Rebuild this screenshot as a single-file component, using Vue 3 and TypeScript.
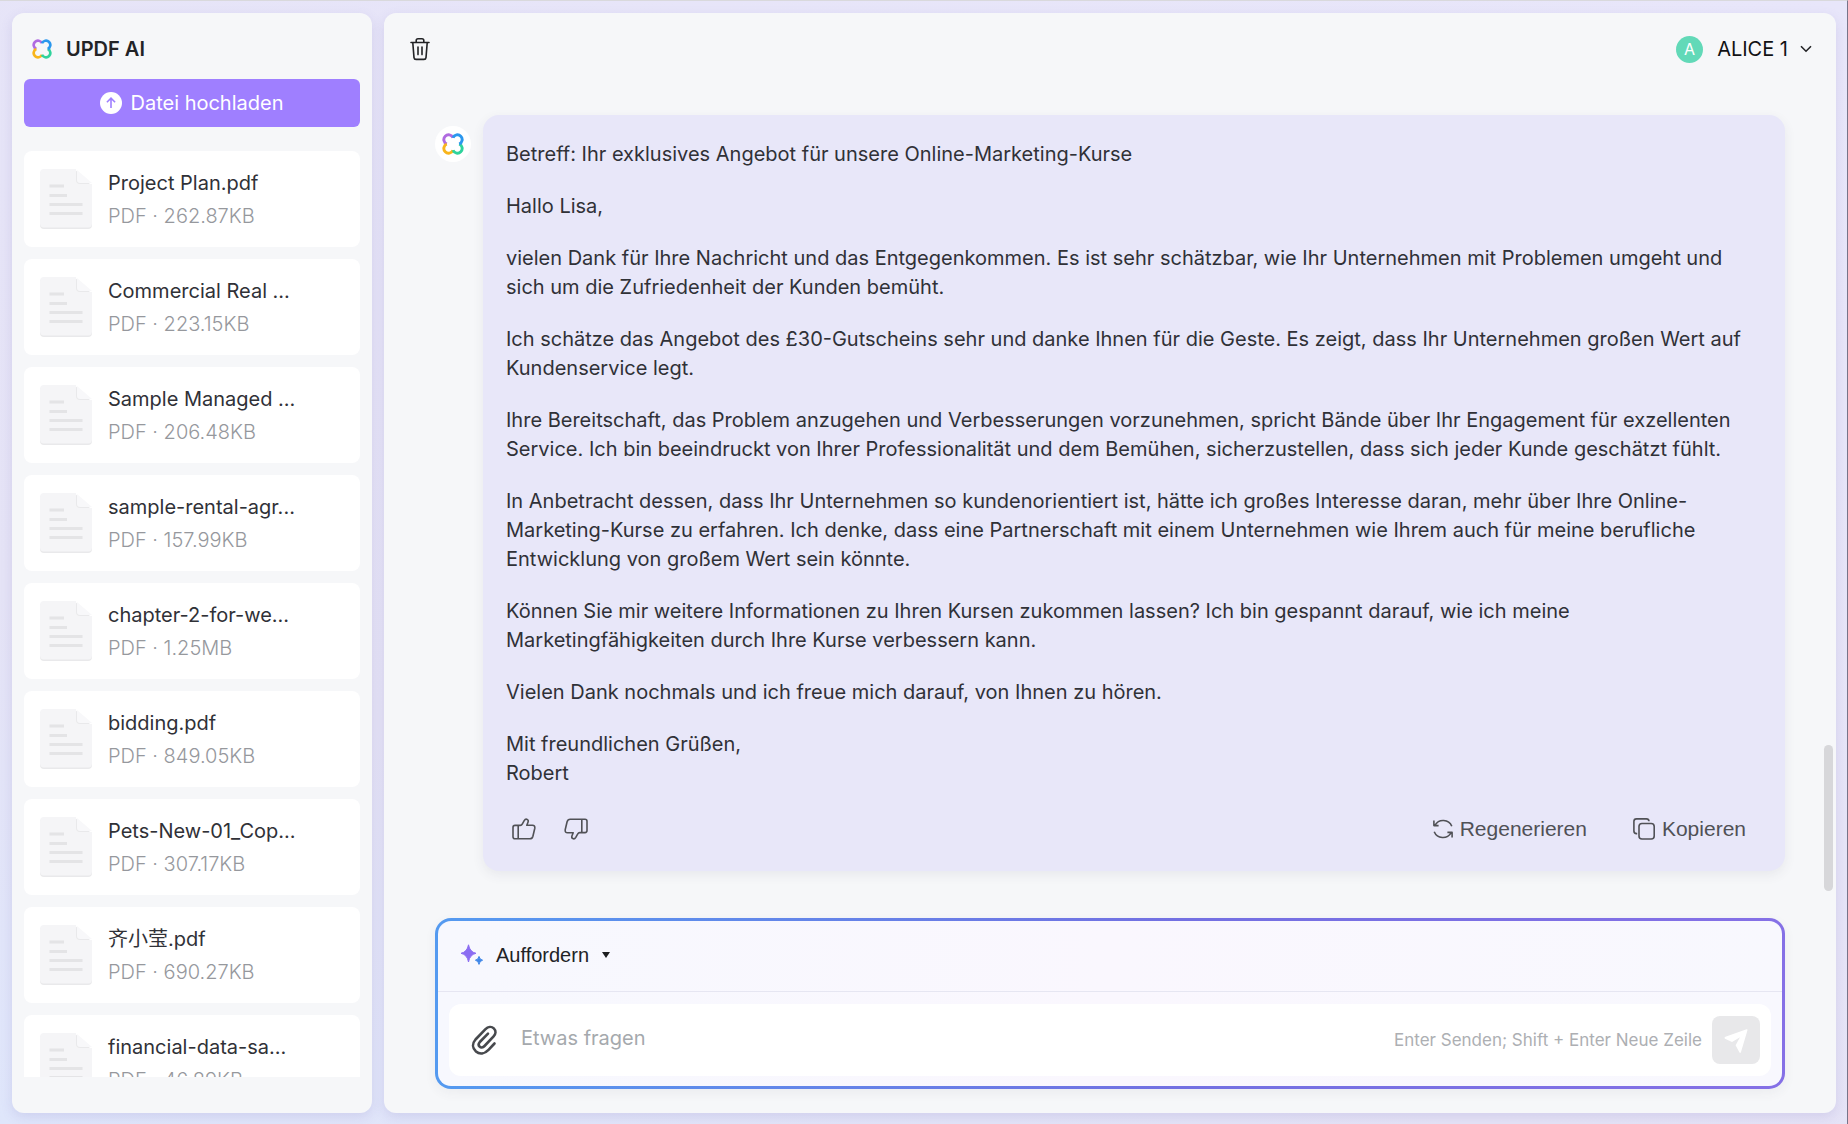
<script setup lang="ts">
interface PdfFile {
  name: string
  size: string
}

const files: PdfFile[] = [
  { name: 'Project Plan.pdf', size: '262.87KB' },
  { name: 'Commercial Real ...', size: '223.15KB' },
  { name: 'Sample Managed ...', size: '206.48KB' },
  { name: 'sample-rental-agr...', size: '157.99KB' },
  { name: 'chapter-2-for-we...', size: '1.25MB' },
  { name: 'bidding.pdf', size: '849.05KB' },
  { name: 'Pets-New-01_Cop...', size: '307.17KB' },
  { name: '齐小莹.pdf', size: '690.27KB' },
  { name: 'financial-data-sa...', size: '46.89KB' },
]

const paragraphs: string[] = [
  'Betreff: Ihr exklusives Angebot für unsere Online-Marketing-Kurse',
  'Hallo Lisa,',
  'vielen Dank für Ihre Nachricht und das Entgegenkommen. Es ist sehr schätzbar, wie Ihr Unternehmen mit Problemen umgeht und\nsich um die Zufriedenheit der Kunden bemüht.',
  'Ich schätze das Angebot des £30-Gutscheins sehr und danke Ihnen für die Geste. Es zeigt, dass Ihr Unternehmen großen Wert auf\nKundenservice legt.',
  'Ihre Bereitschaft, das Problem anzugehen und Verbesserungen vorzunehmen, spricht Bände über Ihr Engagement für exzellenten\nService. Ich bin beeindruckt von Ihrer Professionalität und dem Bemühen, sicherzustellen, dass sich jeder Kunde geschätzt fühlt.',
  'In Anbetracht dessen, dass Ihr Unternehmen so kundenorientiert ist, hätte ich großes Interesse daran, mehr über Ihre Online-\nMarketing-Kurse zu erfahren. Ich denke, dass eine Partnerschaft mit einem Unternehmen wie Ihrem auch für meine berufliche\nEntwicklung von großem Wert sein könnte.',
  'Können Sie mir weitere Informationen zu Ihren Kursen zukommen lassen? Ich bin gespannt darauf, wie ich meine\nMarketingfähigkeiten durch Ihre Kurse verbessern kann.',
  'Vielen Dank nochmals und ich freue mich darauf, von Ihnen zu hören.',
  'Mit freundlichen Grüßen,\nRobert',
]
</script>

<template>
  <div class="app">
    <svg class="defs" aria-hidden="true">
      <defs>
        <symbol id="logo" viewBox="0 0 24 24">
          <g fill="none" stroke-width="3.2">
            <path d="M12 5.200A5.200 5.200 0 1 0 5.200 12" stroke="#b06be0" />
            <path d="M5.200 12A5.200 5.200 0 1 0 12 18.800" stroke="#f8b51c" />
            <path d="M12 18.800A5.200 5.200 0 1 0 18.800 12" stroke="#2fd39c" />
            <path d="M18.800 12A5.200 5.200 0 1 0 12 5.200" stroke="#2a97ee" />
          </g>
        </symbol>
      </defs>
    </svg>

    <aside class="sidebar">
      <header class="brand">
        <svg class="brand-logo"><use href="#logo" /></svg>
        <h1>UPDF AI</h1>
      </header>
      <button class="upload" type="button">
        <svg viewBox="0 0 22 22" width="22" height="22">
          <circle cx="11" cy="11" r="11" fill="#fff" />
          <path d="M11 16V6.400M6.900 10.200L11 6.200L15.100 10.200" fill="none" stroke="#9f7fff" stroke-width="1.600" />
        </svg>
        Datei hochladen
      </button>
      <ul class="files">
        <li v-for="file in files" :key="file.name" class="file">
          <svg class="file-icon" viewBox="0 0 52 60">
            <path d="M4 1.500H36L52 17V56a4 4 0 0 1-4 4H4a4 4 0 0 1-4-4V5.500a4 4 0 0 1 4-4z" fill="#e9e9eb" />
            <path d="M4 0H36V11a4 4 0 0 0 4 4H52V54.500a4 4 0 0 1-4 4H4a4 4 0 0 1-4-4V4a4 4 0 0 1 4-4z" fill="#f5f5f7" />
            <path d="M37 1L52 14H40a3 3 0 0 1-3-3z" fill="#f8f8fa" />
            <path d="M9.500 17H24M9.500 26.500H27M9.500 35.500H42.500M9.500 44.500H42.500" stroke="#e4e4e6" stroke-width="3" />
          </svg>
          <div class="file-text">
            <span class="file-name">{{ file.name }}</span>
            <span class="file-meta">PDF · {{ file.size }}</span>
          </div>
        </li>
      </ul>
    </aside>

    <main class="chat">
      <header class="topbar">
        <button class="icon-button" type="button" aria-label="Verlauf löschen">
          <svg viewBox="0 0 20 24" width="20" height="24" fill="none" stroke="#222326" stroke-width="1.600" stroke-linecap="round" stroke-linejoin="round">
            <path d="M1 5.500H19M6.200 5.200V3.600Q6.200 1.800 8 1.800H12Q13.800 1.800 13.800 3.600V5.200M2.800 5.800L4 20.600Q4.200 22.400 6 22.400H14Q15.800 22.400 16 20.600L17.200 5.800M8 10V17.600M12 10V17.600" />
          </svg>
        </button>
        <button class="account" type="button">
          <span class="avatar">A</span>
          <span class="account-name">ALICE 1</span>
          <svg viewBox="0 0 12 8" width="12" height="8" fill="none" stroke="#222326" stroke-width="1.600">
            <path d="M1 1.200L6 6.200L11 1.200" />
          </svg>
        </button>
      </header>

      <section class="thread">
        <div class="bot"><svg class="bot-logo"><use href="#logo" /></svg></div>
        <article class="bubble">
          <p v-for="(text, i) in paragraphs" :key="i">{{ text }}</p>
          <footer class="actions">
            <button type="button" aria-label="Gefällt mir">
              <svg viewBox="0 0 24 22" width="24" height="22" class="line">
                <path d="M6.200 7.400V20.800M1 9.400Q1 7.400 3 7.400H8.200Q9.600 7.400 10.400 5.800L12.200 2.600Q13.400 0.600 15.200 1.400Q16.800 2.200 16 4.200L14.800 7.200H20.400Q23.200 7.400 22.800 10.200L20.900 18.200Q20.200 20.800 17.800 20.800H3Q1 20.800 1 18.800Z" />
              </svg>
            </button>
            <button type="button" aria-label="Gefällt mir nicht">
              <svg viewBox="0 0 24 22" width="24" height="22" class="line">
                <path d="M17.800 14.600V1.200M23 12.600Q23 14.600 21 14.600H15.800Q14.400 14.600 13.600 16.200L11.800 19.400Q10.600 21.400 8.800 20.600Q7.200 19.800 8 17.800L9.200 14.800H3.600Q0.800 14.600 1.200 11.800L3.100 3.800Q3.800 1.200 6.200 1.200H21Q23 1.200 23 3.200Z" />
              </svg>
            </button>
            <button class="labelled push" type="button">
              <svg viewBox="0 0 20 20" width="20" height="20" class="line">
                <path d="M18.800 7.200A9.400 9.400 0 0 0 2 6.200M0.900 1.600V6.600H5.600M1.200 12.800A9.400 9.400 0 0 0 18 13.800M19.100 18.400V13.400H14.400" />
              </svg>
              Regenerieren
            </button>
            <button class="labelled" type="button">
              <svg viewBox="0 0 22 22" width="22" height="22" class="line">
                <rect x="6" y="5.500" width="15.200" height="15.500" rx="3" />
                <path d="M4.200 15.600H3.500Q0.900 15.600 0.900 13V3.500Q0.900 0.900 3.500 0.900H13.500Q15.800 0.900 16 3.200" />
              </svg>
              Kopieren
            </button>
          </footer>
        </article>
      </section>

      <form class="composer" @submit.prevent>
        <div class="prompt-row">
          <button class="prompt" type="button">
            <svg viewBox="0 0 22 22" width="22" height="22">
              <path d="M7.500 0.800Q8.800 8 15 9.300Q8.800 10.600 7.500 18Q6.200 10.600 0 9.300Q6.200 8 7.500 0.800Z" fill="#8b6df2" stroke="#8b6df2" stroke-linejoin="round" />
              <path d="M18 12.400Q18.600 15.600 21.600 16.200Q18.600 16.800 18 20.400Q17.400 16.800 14.400 16.200Q17.400 15.600 18 12.400Z" fill="#3f87e8" stroke="#3f87e8" stroke-linejoin="round" />
            </svg>
            Auffordern
            <svg viewBox="0 0 8 6" width="8" height="6"><path d="M0 0H8L4 6Z" fill="#1d1e20" /></svg>
          </button>
        </div>
        <div class="ask">
          <button class="icon-button" type="button" aria-label="Datei anhängen">
            <svg viewBox="0 0 26 30" width="26" height="30" fill="none" stroke="#47494d" stroke-width="2.600" stroke-linecap="round">
              <path d="M23.500 18.500L17.500 24.800C13.500 29 8.500 29.500 5 26.500C1.200 23 1 18.500 4.500 14.500L14.500 4.200C17 1.600 20.600 1.300 22.800 3.400C25.300 5.800 24.800 9 22.600 11.400L13.500 21C11.800 22.800 9.800 22.800 8.600 21.600C7.300 20.300 7.400 18.600 8.800 17L17 8.600" />
            </svg>
          </button>
          <input type="text" placeholder="Etwas fragen" aria-label="Etwas fragen" />
          <span class="hint">Enter Senden; Shift + Enter Neue Zeile</span>
          <button class="send" type="submit" aria-label="Senden">
            <svg viewBox="0 0 24 24" width="24" height="24" fill="#fff">
              <path d="M22.600 1.200Q23.800 1 23.400 2.400L17 24Q16.200 26 15.200 24L11.600 17.200L16 9.200L8 14L1 10.800Q-0.400 9.600 1.400 8.800Z" />
            </svg>
          </button>
        </div>
      </form>
      <span class="scroll-thumb"></span>
    </main>
  </div>
</template>

<style>
body {
  margin: 0;
}
</style>

<style scoped>
.app {
  box-sizing: border-box;
  display: flex;
  gap: 12px;
  height: 100vh;
  padding: 12px 11px 11px 12px;
  border-top: 1px solid #d9d9dc;
  border-right: 1px solid #77748a;
  background: linear-gradient(20deg, #dfe6fb 0%, #e5e3f6 30%, #e8e6fa 100%);
  font-family: Inter, "Noto Sans CJK SC", sans-serif;
  font-weight: 400;
  font-size: 20px;
  color: #303137;
  overflow: hidden;
}

.defs {
  position: absolute;
  width: 0;
  height: 0;
}

button {
  display: flex;
  align-items: center;
  margin: 0;
  padding: 0;
  border: 0;
  background: none;
  font: inherit;
  color: inherit;
}

svg {
  display: block;
  flex: none;
  overflow: visible;
}

.sidebar,
.chat {
  box-sizing: border-box;
  border-radius: 12px;
  background: #f6f7f9;
  box-shadow: 0 4px 12px rgba(110, 100, 180, 0.16);
}

.sidebar {
  display: flex;
  flex-direction: column;
  flex: none;
  width: 360px;
  padding: 0 12px 36px;
}

.brand {
  display: flex;
  align-items: center;
  gap: 14px;
  height: 66px;
  padding: 6px 8px 0;
  box-sizing: border-box;
}

.brand-logo {
  width: 20px;
  height: 20px;
}

.brand h1 {
  margin: 0;
  font-size: 20px;
  font-weight: 600;
  color: #222326;
}

.upload {
  flex: none;
  justify-content: center;
  gap: 8px;
  height: 48px;
  border-radius: 6px;
  background: #9f7fff;
  color: #fff;
}

.files {
  flex: 1;
  min-height: 0;
  margin: 24px 0 0;
  padding: 0;
  overflow: hidden;
  list-style: none;
}

.file {
  display: flex;
  gap: 16px;
  height: 96px;
  margin-bottom: 12px;
  padding: 16px 16px 0;
  box-sizing: border-box;
  border-radius: 8px;
  background: #fff;
}

.file-icon {
  width: 52px;
  height: 60px;
  margin-top: 2px;
}

.file-text {
  display: flex;
  flex-direction: column;
  line-height: 33px;
  white-space: nowrap;
}

.file-meta {
  font-weight: 300;
  color: #96989d;
}

.chat {
  position: relative;
  display: flex;
  flex-direction: column;
  flex: 1;
  min-width: 0;
  padding: 0 51px 24px;
}

.topbar {
  display: flex;
  align-items: center;
  justify-content: space-between;
  height: 72px;
  margin: 0 -27px 0 -25px;
}

.account {
  color: #111214;
}

.account-name {
  margin: 0 12px 0 14px;
}

.avatar {
  width: 27px;
  height: 27px;
  border-radius: 50%;
  background: #62d9b8;
  color: #fff;
  font-size: 16px;
  line-height: 27px;
  text-align: center;
}

.thread {
  display: flex;
  align-items: flex-start;
  gap: 12px;
  margin-top: 30px;
}

.bot {
  display: flex;
  align-items: center;
  justify-content: center;
  flex: none;
  width: 36px;
  height: 36px;
  margin-top: 11px;
  border-radius: 50%;
  background: #fff;
}

.bot-logo {
  width: 22px;
  height: 22px;
}

.bubble {
  flex: 1;
  min-width: 0;
  padding: 25px 39px 26px 23px;
  border-radius: 16px;
  background: #e8e7f9;
  box-shadow: 0 4px 12px rgba(60, 60, 90, 0.08);
  line-height: 29px;
}

.bubble p {
  margin: 0 0 23px;
  white-space: pre;
}

.actions {
  display: flex;
  align-items: center;
  gap: 28px;
  height: 32px;
  margin-top: 25px;
  padding-left: 6px;
  color: #505156;
}

.line {
  fill: none;
  stroke: #505156;
  stroke-width: 1.6;
  stroke-linejoin: round;
}

.labelled {
  gap: 7px;
  margin-left: 18px;
  font: 400 21px "Liberation Sans", sans-serif;
}

.push {
  margin-left: auto;
}

.composer {
  display: flex;
  flex-direction: column;
  box-sizing: border-box;
  height: 171px;
  margin-top: auto;
  border: 3px solid transparent;
  border-radius: 16px;
  background:
    linear-gradient(90deg, #f7f8fe, #faf7fe 50%, #f8f8fe) padding-box,
    linear-gradient(90deg, #549af0, #7370e2 55%, #8570e6) border-box;
  box-shadow: 0 4px 12px rgba(60, 60, 90, 0.06);
}

.prompt-row {
  display: flex;
  height: 70px;
  padding-left: 23px;
  border-bottom: 1px solid #e6e6f2;
}

.prompt {
  gap: 13px;
  padding-bottom: 2px;
  font: 400 20px "Liberation Sans", sans-serif;
  color: #222326;
}

.ask {
  display: flex;
  align-items: center;
  height: 72px;
  margin: 12px 11px 0;
  padding: 0 11px 0 22px;
  border-radius: 12px;
  background: #fff;
}

.ask input {
  flex: 1;
  min-width: 0;
  margin-left: 24px;
  padding: 0 0 4px;
  border: 0;
  outline: 0;
  background: none;
  font: inherit;
}

.ask input::placeholder {
  color: #a5a9ad;
  opacity: 1;
}

.hint {
  margin-right: 10px;
  font-size: 17px;
  color: #adafb3;
}

.send {
  justify-content: center;
  width: 48px;
  height: 48px;
  border-radius: 8px;
  background: #e8e8ea;
}

.scroll-thumb {
  position: absolute;
  top: 732px;
  right: 3px;
  width: 9px;
  height: 146px;
  border-radius: 5px;
  background: #d7d7da;
}
</style>
